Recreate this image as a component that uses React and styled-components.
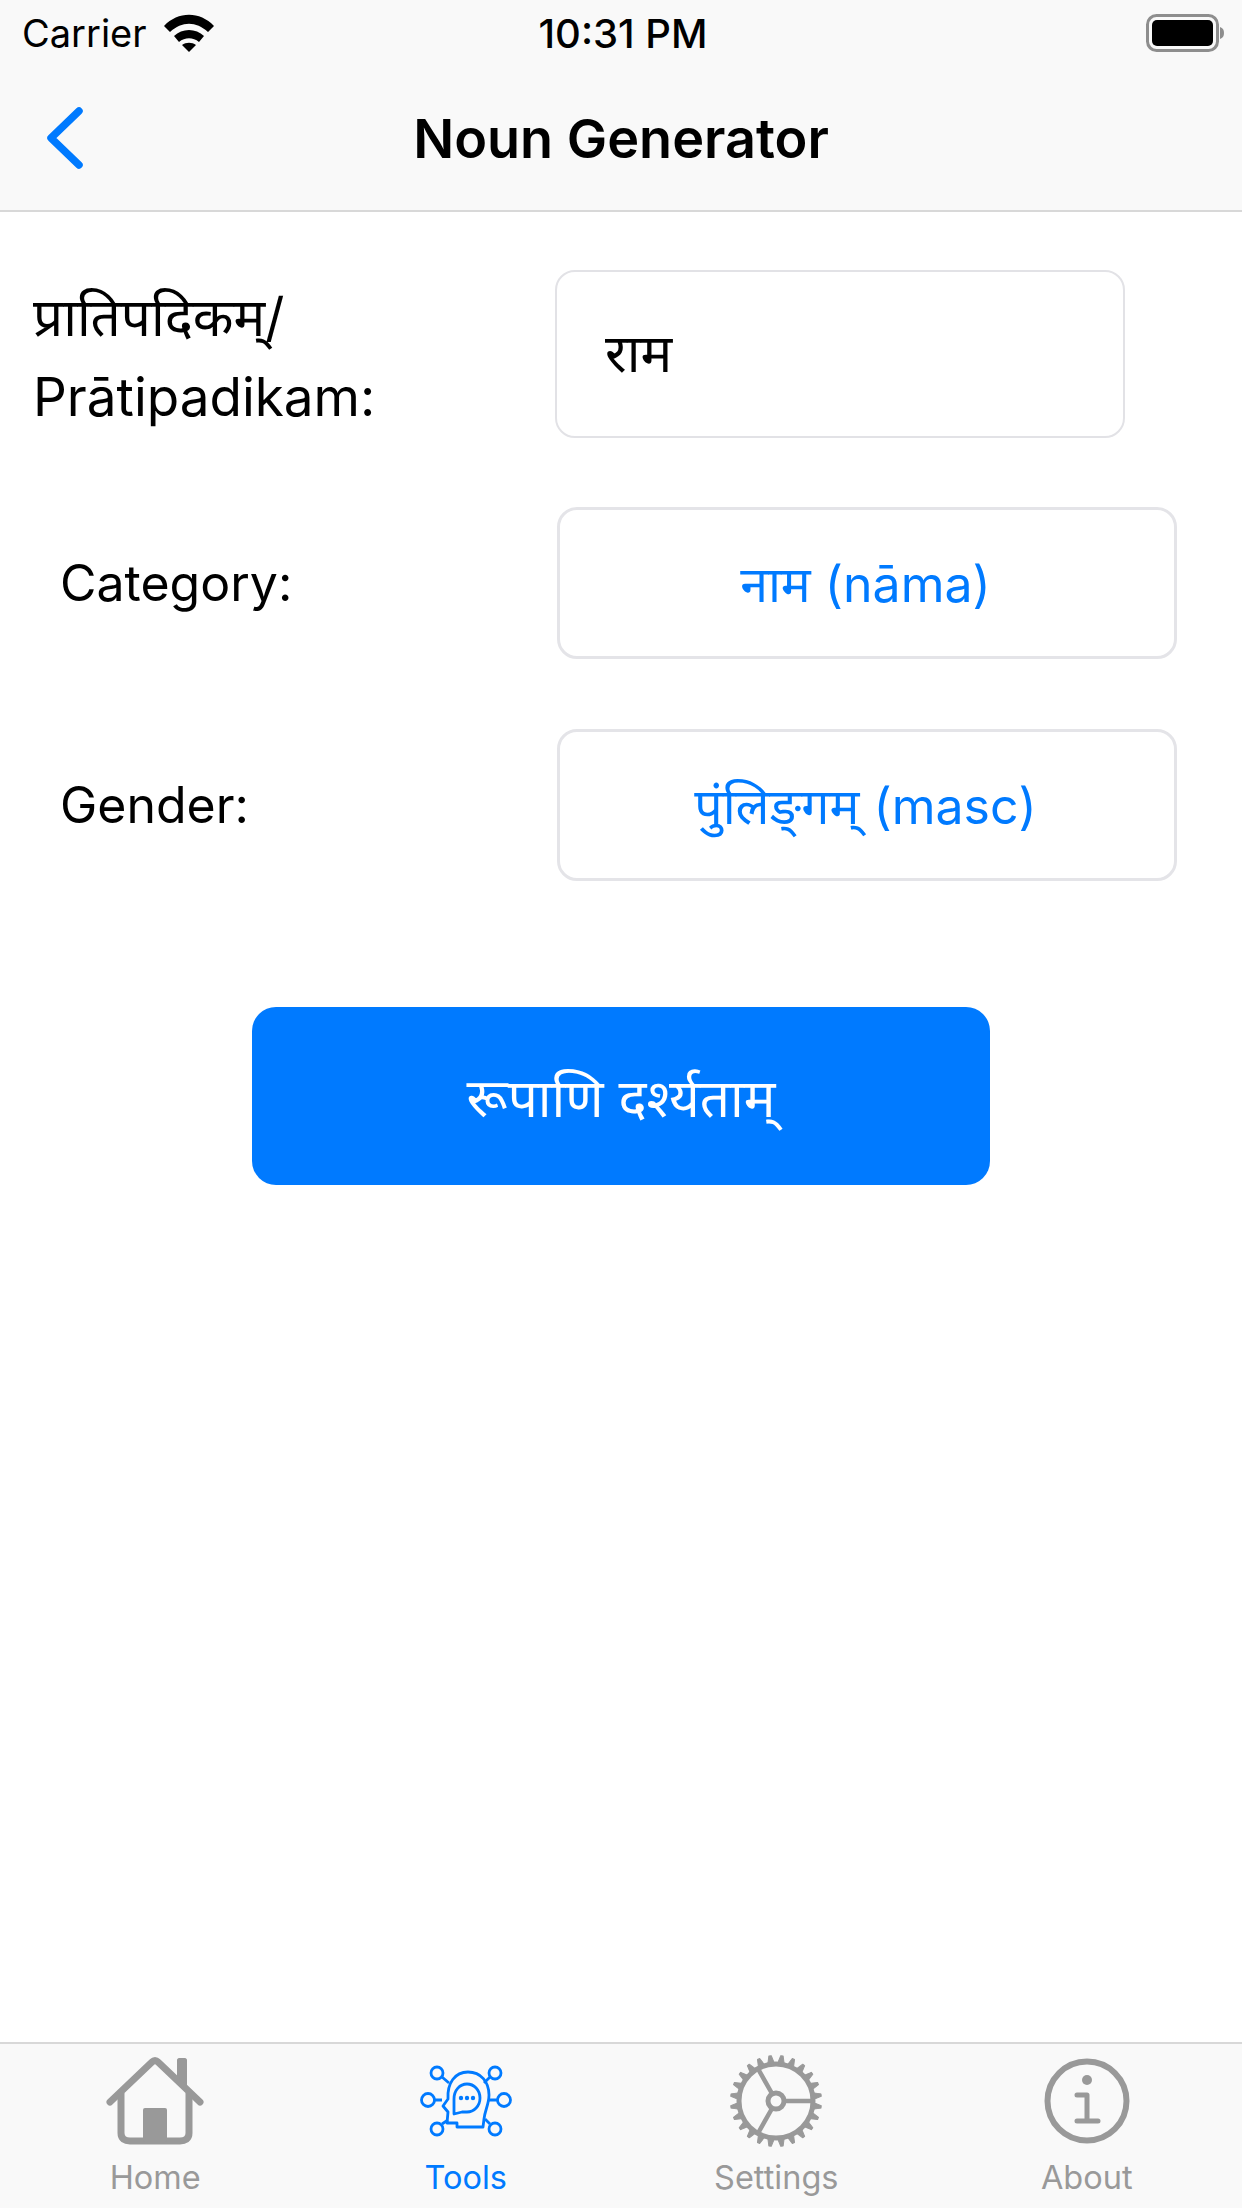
import styled, { createGlobalStyle } from 'styled-components'

const BLUE = '#007aff'
const GREY = '#999999'
const FONT = '"Inter", "Noto Sans", "Noto Sans Devanagari", "Liberation Sans", sans-serif'

const GlobalStyle = createGlobalStyle`
  html, body {
    margin: 0;
    padding: 0;
    background: #fff;
    font-family: ${FONT};
    color: #000;
  }
  * { box-sizing: border-box; }
`

const Screen = styled.div`
  width: 1242px;
  height: 2208px;
  display: flex;
  flex-direction: column;
  overflow: hidden;
`

const Header = styled.header`
  height: 212px;
  flex-shrink: 0;
  background: #f9f9f9;
  border-bottom: 2px solid #d8d8d8;
`

const StatusBar = styled.div`
  height: 66px;
  padding: 0 18px 0 22px;
  display: grid;
  grid-template-columns: 1fr auto 1fr;
  align-items: center;
`

const StatusLeft = styled.div`
  display: flex;
  align-items: center;
  gap: 17px;
`

const StatusText = styled.span`
  font-size: ${props => props.$medium ? 40 : 38}px;
  font-weight: ${props => props.$medium ? 500 : 400};
`

const StatusRight = styled.div`
  display: flex;
  justify-content: flex-end;
`

const NavBar = styled.div`
  height: 144px;
  padding: 0 45px;
  display: grid;
  grid-template-columns: 1fr auto 1fr;
  align-items: center;
`

const NavTitle = styled.h1`
  margin: 0;
  font-size: 54px;
  font-weight: 600;
`

const Main = styled.main`
  flex: 1;
  display: flex;
  flex-direction: column;
  padding-top: 58px;
`

const Row = styled.div`
  display: flex;
  align-items: center;
  padding-left: ${props => props.$indent}px;
  margin-bottom: ${props => props.$gap}px;
`

const Label = styled.div`
  width: ${props => props.$width}px;
  flex-shrink: 0;
  padding-top: ${props => props.$large ? 6 : 0}px;
  font-size: ${props => props.$large ? 53 : 50}px;
  line-height: 80px;
`

const TextField = styled.div`
  width: 570px;
  height: 168px;
  border: 2px solid #e2e2e6;
  border-radius: 20px;
  padding: 0 48px 6px;
  display: flex;
  align-items: center;
  font-size: 53px;
`

const Picker = styled.div`
  width: 620px;
  height: 152px;
  border: 3px solid #e4e4e8;
  border-radius: 20px;
  padding-right: 3px;
  display: flex;
  align-items: center;
  justify-content: center;
  font-size: 50px;
  color: ${BLUE};
`

const SubmitButton = styled.button`
  align-self: center;
  width: 738px;
  height: 178px;
  margin-top: 126px;
  border: none;
  border-radius: 24px;
  background: ${BLUE};
  color: #fff;
  font-family: inherit;
  font-size: 53px;
`

const TabBar = styled.nav`
  height: 166px;
  flex-shrink: 0;
  background: #f9f9f9;
  border-top: 2px solid #d8d8d8;
  display: grid;
  grid-template-columns: repeat(4, 1fr);
`

const Tab = styled.div`
  display: flex;
  flex-direction: column;
  align-items: center;
  color: ${props => props.$active ? BLUE : GREY};
`

const TabIcon = styled.div`
  height: 114px;
  display: flex;
  align-items: center;
  justify-content: center;
`

const TabLabel = styled.span`
  font-size: 32.5px;
  line-height: 40px;
`

const WifiIcon = () => (
  <svg width="50" height="38" viewBox="0 0 50 38">
    <path d="M0 12C14-3 36-3 50 12l-6 6C32 7 18 7 6 18z" fill="#000" />
    <path d="M10 22c8-8 22-8 30 0l-5 6c-6-5-14-5-20 0z" fill="#000" />
    <path d="M18 31c4-3 10-3 14 0l-7 7z" fill="#000" />
  </svg>
)

const BatteryIcon = () => (
  <svg width="78" height="38" viewBox="0 0 78 38">
    <rect x="1.5" y="1.5" width="70" height="35" rx="9" fill="none" stroke="#8e8e8e" strokeWidth="3" />
    <rect x="6" y="6" width="61" height="26" rx="5" fill="#000" />
    <path d="M74 13c3 1 4 3 4 6s-1 5-4 6z" fill="#8e8e8e" />
  </svg>
)

const BackIcon = () => (
  <svg width="40" height="62" viewBox="0 0 40 62">
    <path d="M34 4 6 31l28 27" fill="none" stroke={BLUE} strokeWidth="7.5" strokeLinecap="round" strokeLinejoin="round" />
  </svg>
)

const HomeIcon = () => (
  <svg width="98" height="88" viewBox="0 0 98 88">
    <path d="M4 45 46 5c2-2 4-2 6 0l42 40" fill="none" stroke="currentColor" strokeWidth="7" strokeLinecap="round" strokeLinejoin="round" />
    <path d="M71 20V3c0-1 1-2 2-2h6c1 0 2 1 2 2v26z" fill="currentColor" />
    <path d="M15 36v40c0 6 4 8 9 8h50c5 0 9-2 9-8V36" fill="none" stroke="currentColor" strokeWidth="7" />
    <rect x="37" y="51" width="24" height="34" rx="2" fill="currentColor" />
  </svg>
)

const ToolsIcon = () => (
  <svg width="92" height="74" viewBox="0 0 92 74" fill="none" stroke="currentColor" strokeWidth="2.8">
    <circle cx="17" cy="9" r="6" />
    <circle cx="75" cy="9" r="6" />
    <circle cx="8" cy="36" r="6.5" />
    <circle cx="84" cy="36" r="6.5" />
    <circle cx="17" cy="65" r="6" />
    <circle cx="75" cy="65" r="6" />
    <path d="M22 13l7 6M70 13l-6 6M15 36h7M69 36h9M22 60l6-4M70 60l-5-5" />
    <path d="M23 42l5-7c-1-16 7-27 20-27 13 0 21 10 21 23 0 9-4 15-5 24l-1 8H37v-4H27l1-11z" strokeLinejoin="round" />
    <path d="M34 50c0-5 0-9 0-15 0-9 6-15 13-15s13 6 13 14-6 14-13 14H42z" strokeLinejoin="round" />
    <circle cx="41" cy="34" r="2.2" fill="currentColor" stroke="none" />
    <circle cx="47" cy="34" r="2.2" fill="currentColor" stroke="none" />
    <circle cx="53" cy="34" r="2.2" fill="currentColor" stroke="none" />
  </svg>
)

const GEAR_TEETH = Array.from({ length: 24 }, (_, i) => i * 15 + 7.5)

const SettingsIcon = () => (
  <svg width="94" height="94" viewBox="-47 -47 94 94" fill="none" stroke="currentColor">
    <circle r="37" strokeWidth="5" />
    {GEAR_TEETH.map(angle => (
      <path key={angle} d="M-3.5 -37 L-1.2 -45.5 L1.2 -45.5 L3.5 -37 Z" fill="currentColor" strokeWidth="1" strokeLinejoin="round" transform={`rotate(${angle})`} />
    ))}
    <circle r="8" strokeWidth="5" />
    <path d="M8 0H37M-4 -7.5 -19 -34M-4 7.5 -19 34" strokeWidth="4.5" />
  </svg>
)

const AboutIcon = () => (
  <svg width="86" height="86" viewBox="0 0 86 86">
    <circle cx="43" cy="43" r="39.5" fill="none" stroke="currentColor" strokeWidth="6" />
    <circle cx="43" cy="22" r="5" fill="currentColor" />
    <path d="M33 37h10v26M33 63h21" fill="none" stroke="currentColor" strokeWidth="5" strokeLinecap="round" strokeLinejoin="round" />
  </svg>
)

const tabs = [
  { label: 'Home', icon: <HomeIcon /> },
  { label: 'Tools', icon: <ToolsIcon />, active: true },
  { label: 'Settings', icon: <SettingsIcon /> },
  { label: 'About', icon: <AboutIcon /> },
]

const App = () => {
  return (
    <>
      <GlobalStyle />
      <Screen>
        <Header>
          <StatusBar>
            <StatusLeft>
              <StatusText>Carrier</StatusText>
              <WifiIcon />
            </StatusLeft>
            <StatusText $medium>10:31 PM</StatusText>
            <StatusRight>
              <BatteryIcon />
            </StatusRight>
          </StatusBar>
          <NavBar>
            <BackIcon />
            <NavTitle>Noun Generator</NavTitle>
          </NavBar>
        </Header>
        <Main>
          <Row $indent={33} $gap={69}>
            <Label $width={522} $large>प्रातिपदिकम्/<br />Prātipadikam:</Label>
            <TextField>राम</TextField>
          </Row>
          <Row $indent={60} $gap={70}>
            <Label $width={497}>Category:</Label>
            <Picker>नाम (nāma)</Picker>
          </Row>
          <Row $indent={60} $gap={0}>
            <Label $width={497}>Gender:</Label>
            <Picker>{'पुंलिङ्\u200Cगम् (masc)'}</Picker>
          </Row>
          <SubmitButton>रूपाणि दर्श्यताम्</SubmitButton>
        </Main>
        <TabBar>
          {tabs.map(tab => (
            <Tab key={tab.label} $active={tab.active}>
              <TabIcon>{tab.icon}</TabIcon>
              <TabLabel>{tab.label}</TabLabel>
            </Tab>
          ))}
        </TabBar>
      </Screen>
    </>
  )
}

export default App
